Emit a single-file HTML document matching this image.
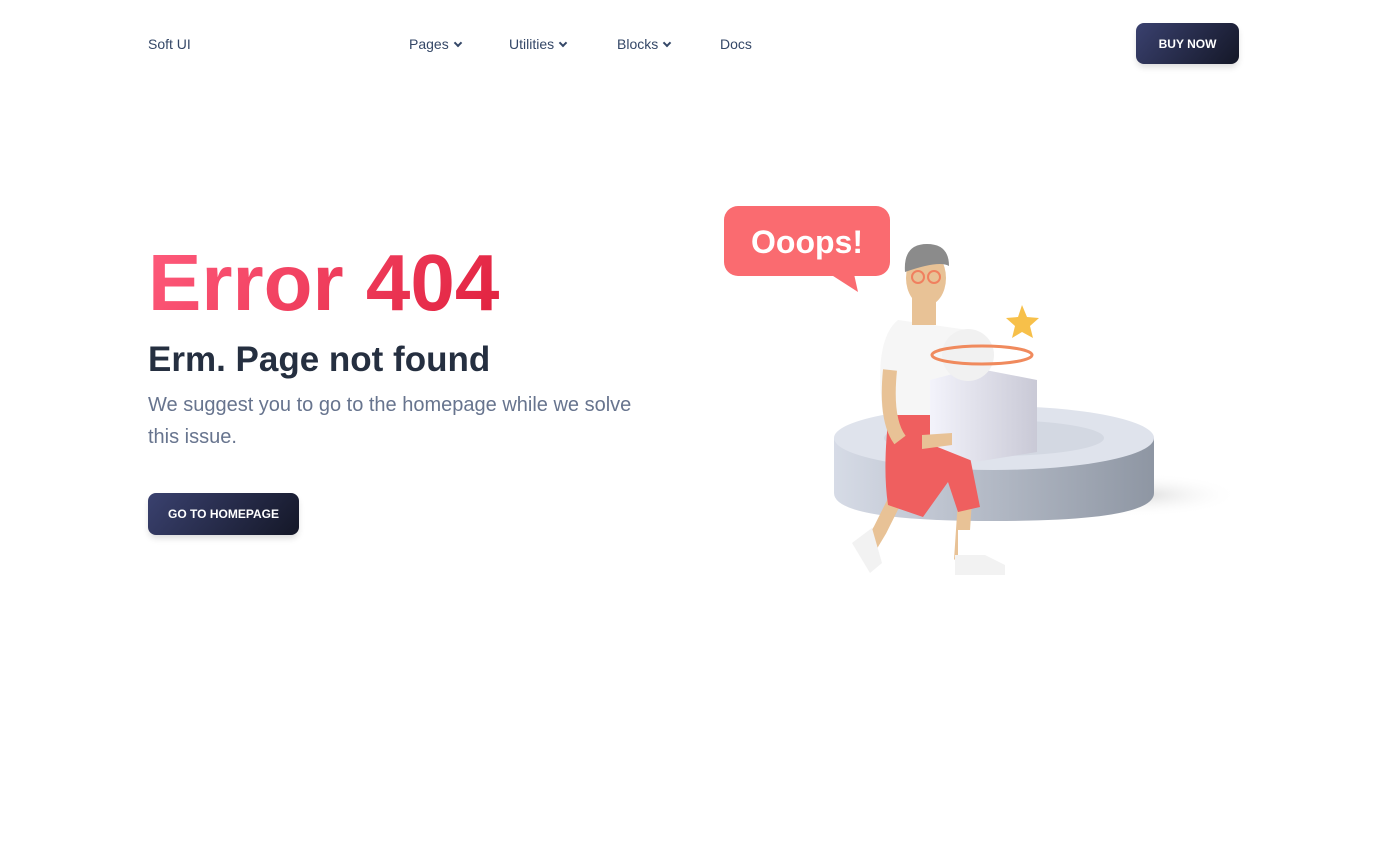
<!DOCTYPE html>
<html><head><meta charset="utf-8"><style>
html,body{margin:0;padding:0;background:#fff;}
body{width:1386px;height:841px;overflow:hidden;position:relative;font-family:"Liberation Sans",sans-serif;}
.nav{position:absolute;top:0;left:0;right:0;height:88px;font-size:14px;color:#344767}
.nav span{position:absolute;top:36px}
.chev{display:inline-block;width:4px;height:4px;border-right:2px solid #344767;border-bottom:2px solid #344767;transform:rotate(45deg);margin-left:6px;position:relative;top:-3px}
.btn{position:absolute;background:linear-gradient(310deg,#141727,#3a416f);color:#fff;font-weight:bold;font-size:12px;border-radius:8px;display:flex;align-items:center;justify-content:center;box-shadow:0 4px 7px -1px rgba(0,0,0,.15)}
h1{position:absolute;left:148px;top:233px;margin:0;font-size:80px;font-weight:bold;background:linear-gradient(310deg,#e0203d,#ff5c7d);-webkit-background-clip:text;color:transparent;line-height:100px}
h2{position:absolute;left:148px;top:337px;margin:0;font-size:35px;font-weight:bold;color:#252f40;line-height:46px}
p{position:absolute;left:148px;top:389px;margin:0;width:505px;font-size:20px;line-height:32px;color:#67748e}
</style></head><body>
<div class="nav">
<span style="left:148px">Soft UI</span>
<span style="left:409px">Pages<i class="chev"></i></span>
<span style="left:509px">Utilities<i class="chev"></i></span>
<span style="left:617px">Blocks<i class="chev"></i></span>
<span style="left:720px">Docs</span>
</div>
<div class="btn" style="left:1136px;top:23px;width:103px;height:41px">BUY NOW</div>
<h1>Error 404</h1>
<h2>Erm. Page not found</h2>
<p>We suggest you to go to the homepage while we solve this issue.</p>
<div class="btn" style="left:148px;top:493px;width:151px;height:42px">GO TO HOMEPAGE</div>

<svg style="position:absolute;left:700px;top:190px" width="560" height="410" viewBox="0 0 560 410">
<defs>
<linearGradient id="cyl" x1="0" x2="1"><stop offset="0" stop-color="#d6dbe6"/><stop offset="1" stop-color="#8e96a3"/></linearGradient>
<linearGradient id="box" x1="0" x2="1"><stop offset="0" stop-color="#f3f3fb"/><stop offset="1" stop-color="#c9c9d6"/></linearGradient>
<radialGradient id="sh"><stop offset="0" stop-color="#ddd"/><stop offset="1" stop-color="#fff" stop-opacity="0"/></radialGradient>
</defs>
<ellipse cx="440" cy="305" rx="100" ry="22" fill="url(#sh)"/>
<path d="M134 248 v55 q0 28 160 28 q160 0 160 -28 v-55z" fill="url(#cyl)"/>
<ellipse cx="294" cy="248" rx="160" ry="32" fill="#dfe3ec"/>
<ellipse cx="294" cy="248" rx="110" ry="18" fill="#d3d8e2"/>
<rect x="24" y="16" width="166" height="70" rx="14" fill="#fa6b70"/>
<path d="M130 84 l28 18 l-4 -18z" fill="#fa6b70"/>
<text x="107" y="63" text-anchor="middle" font-family="Liberation Sans" font-weight="bold" font-size="32" fill="#fff">Ooops!</text>
<path d="M200 300 l-20 40 l-15 25" stroke="#e8c296" stroke-width="14" fill="none"/>
<path d="M255 290 l10 20 l-4 60" stroke="#e8c296" stroke-width="14" fill="none"/>
<rect x="258" y="340" width="22" height="30" fill="#fff"/>
<path d="M255 365 h30 l20 10 v10 h-50z" fill="#f2f2f2"/>
<path d="M172 338 l-20 15 l18 30 l12 -10z" fill="#f2f2f2"/>
<path d="M190 215 q-8 60 -2 100 l35 12 l25 -35 l10 30 l22 -5 l-20 -100z" fill="#ef5f5f"/>
<path d="M198 130 q-25 20 -15 95 h85 v-85 z" fill="#f6f6f6"/>
<path d="M190 180 q-5 50 10 70" stroke="#e8c296" stroke-width="14" fill="none"/>
<rect x="212" y="80" width="24" height="55" fill="#e8c296"/>
<ellipse cx="226" cy="88" rx="20" ry="28" fill="#e8c296"/>
<path d="M205 82 q-2 -28 22 -28 q22 0 22 22 q-10 -6 -44 6z" fill="#8b8b8b"/>
<circle cx="218" cy="87" r="6" fill="none" stroke="#f0805f" stroke-width="2"/>
<circle cx="234" cy="87" r="6" fill="none" stroke="#f0805f" stroke-width="2"/>
<path d="M230 190 l45 -12 l62 12 v72 l-62 10 l-45 -18z" fill="url(#box)"/>
<circle cx="268" cy="165" r="26" fill="#f1f1f1"/>
<ellipse cx="282" cy="165" rx="50" ry="9" fill="none" stroke="#f08a5d" stroke-width="3"/>
<path d="M322 115 l5 12 l12 1 l-9 8 l3 12 l-11 -6 l-10 6 l3 -12 l-9 -8 l12 -1z" fill="#f7c04a"/>
<path d="M222 245 l30 -2 v12 l-30 4z" fill="#e8c296"/>
</svg>
</body></html>
